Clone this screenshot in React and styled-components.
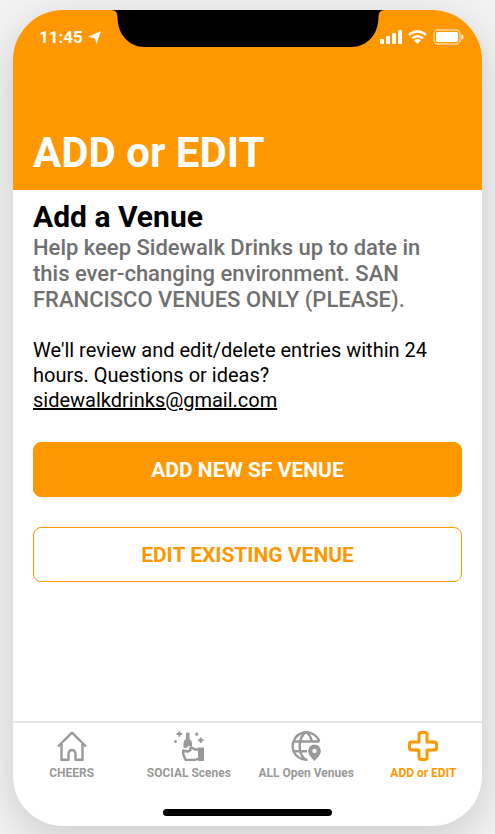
import React, { useState } from 'react';
import styled, { createGlobalStyle } from 'styled-components';

const orange = '#ff9800';
const grey = '#999';

const GlobalStyle = createGlobalStyle`
  * { box-sizing: border-box; }
  body {
    margin: 0;
    background: #f2f2f2;
    font-family: Roboto, 'Liberation Sans', sans-serif;
  }
`;

const Page = styled.div`
  display: flex;
  min-height: 100vh;
  padding: 10px 13px 8px;
  overflow: hidden;
`;

const Phone = styled.div`
  position: relative;
  flex: 1;
  display: flex;
  flex-direction: column;
  background: #fff;
  border-radius: 50px;
  box-shadow: 0 12px 40px rgba(0, 0, 0, 0.16);
`;

const Notch = styled.svg`
  position: absolute;
  top: 0;
  left: 50%;
  width: 273px;
  height: 37px;
  transform: translateX(-50%);
`;

const Header = styled.header`
  display: flex;
  flex-direction: column;
  justify-content: space-between;
  height: 180px;
  padding: 16px 18px 16px 20px;
  border-radius: 50px 50px 0 0;
  background: ${orange};
  color: #fff;
`;

const StatusBar = styled.div`
  display: flex;
  justify-content: space-between;
  align-items: center;
  height: 22px;
  padding-left: 6px;
`;

const Clock = styled.div`
  display: flex;
  align-items: center;
  gap: 5px;
  font-size: 17px;
  font-weight: 700;
`;

const Indicators = styled.div`
  display: flex;
  align-items: center;
  gap: 6px;
`;

const Title = styled.h1`
  margin: 0;
  font-size: 42px;
  line-height: 42px;
  font-weight: 700;
`;

const Content = styled.main`
  flex: 1;
  padding: 9px 20px 20px;
`;

const Heading = styled.h2`
  margin: 0;
  font-size: 30px;
  line-height: 36px;
  font-weight: 700;
  color: #000;
`;

const Subheading = styled.p`
  margin: 0 0 25px;
  font-size: 22px;
  line-height: 26px;
  font-weight: 500;
  color: #707070;
`;

const Note = styled.p`
  margin: 0 0 29px;
  font-size: 20px;
  line-height: 25px;
  color: #000;
`;

const MailLink = styled.a`
  color: inherit;
`;

const Button = styled.button`
  display: block;
  width: 100%;
  height: 55px;
  margin-bottom: 30px;
  border: 1px solid ${orange};
  border-radius: 8px;
  background: ${({ $outlined }) => ($outlined ? '#fff' : orange)};
  color: ${({ $outlined }) => ($outlined ? orange : '#fff')};
  font-family: inherit;
  font-size: 21px;
  line-height: 24px;
  font-weight: 700;
  cursor: pointer;
`;

const TabBar = styled.nav`
  display: grid;
  grid-template-columns: repeat(4, 1fr);
  border-top: 2px solid #e5e5e5;
  padding-top: 8px;
`;

const Tab = styled.button`
  display: flex;
  flex-direction: column;
  align-items: center;
  gap: 4px;
  padding: 0;
  border: 0;
  background: none;
  color: ${({ $active }) => ($active ? orange : grey)};
  font-family: inherit;
  font-size: 12px;
  line-height: 16px;
  font-weight: 700;
  white-space: nowrap;
  cursor: pointer;
`;

const TabIcon = styled.svg`
  width: 30px;
  height: 30px;
  fill: none;
  stroke: currentColor;
  stroke-width: 2.4;
  stroke-linejoin: round;
`;

const HomeIndicator = styled.div`
  width: 169px;
  height: 7px;
  margin: 28px auto 10px;
  border-radius: 4px;
  background: #000;
`;

const HomeIcon = () => (
  <TabIcon viewBox="0 0 30 30">
    <path d="M1 15.500 15 1.700l14 13.800" />
    <path d="M4.500 13v15.800h7v-6.300a3.500 3.500 0 0 1 7 0v6.300h7V13" />
  </TabIcon>
);

const BottleIcon = () => (
  <TabIcon viewBox="0 0 30 30">
    <g fill="currentColor" stroke="none">
      <path d="M12 2.500Q12 1.500 13.700 1.500T15.500 2.500V8q2.500 1.500 2.500 4v3.500l-3-.5-3 2H9.500v-5q0-2.500 2.500-4Z" />
      <path d="M24 16.500h6V30h-6Z" />
      <circle cx="1.500" cy="10.500" r="1.400" />
      <circle cx="22.700" cy="3.200" r="1.600" />
    </g>
    <path strokeWidth="2" d="M5.300.2v5.600M2.500 3h5.600M26.700 6.400V12M23.900 9.200h5.600" />
    <path d="M24 18.500h-3l-3.500-2q-2 .2-1 2.500l-2.500 1.500-4.800-1v3.500l1.500 4 1.300 2H21l3-1.500" />
  </TabIcon>
);

const GlobeIcon = () => (
  <TabIcon viewBox="0 0 30 30">
    <path d="M28.300 10.500A13.700 13.700 0 1 0 16.500 28.700" />
    <path d="M15 1C6.500 7 6.500 23 15 29M15 1q5 3.500 5.800 9.500M2 10.500h26.300M2 20.200h14" />
    <path
      fill="currentColor"
      stroke="none"
      fillRule="evenodd"
      d="M23.500 13.500a6.300 6.300 0 0 1 6.300 6.300c0 3.700-3 6.700-6.300 10.200-3.300-3.500-6.300-6.500-6.300-10.200a6.300 6.300 0 0 1 6.300-6.300Zm0 4.200a2.200 2.200 0 1 0 0 4.400 2.200 2.200 0 0 0 0-4.400Z"
    />
  </TabIcon>
);

const PlusIcon = () => (
  <TabIcon viewBox="0 0 30 30">
    <path
      strokeWidth="3"
      d="M13 1.500h4q2 0 2 2V11h7.500q2 0 2 2v4q0 2-2 2H19v7.500q0 2-2 2h-4q-2 0-2-2V19H3.500q-2 0-2-2v-4q0-2 2-2H11V3.500q0-2 2-2Z"
    />
  </TabIcon>
);

const LocationArrow = () => (
  <svg width="13" height="13" viewBox="0 0 13 13" fill="currentColor">
    <path d="M13 0 8.500 13 7 7.500.2 5.800Z" />
  </svg>
);

const SignalIcon = () => (
  <svg width="22" height="14" viewBox="0 0 22 14" fill="currentColor">
    <rect x="0" y="9" width="4" height="5" rx="1" />
    <rect x="6" y="6" width="4" height="8" rx="1" />
    <rect x="12" y="3" width="4" height="11" rx="1" />
    <rect x="18" y="0" width="4" height="14" rx="1" />
  </svg>
);

const WifiIcon = () => (
  <svg width="19" height="14" viewBox="0 0 19 14" fill="none" stroke="currentColor" strokeWidth="2.400">
    <path d="M1 5a12.200 12.200 0 0 1 17 0M4 8.400a8 8 0 0 1 11 0" />
    <path fill="currentColor" stroke="none" d="M6 10.500q3.500-2.800 7 0L9.500 14Z" />
  </svg>
);

const BatteryIcon = () => (
  <svg width="31" height="16" viewBox="0 0 31 16" fill="currentColor">
    <rect x="1" y="1" width="26" height="14" rx="4" fill="none" stroke="#ffd699" strokeWidth="1.400" />
    <rect x="3" y="3" width="22" height="10" rx="1.500" />
    <path d="M28.500 5q2 1 2 3t-2 3Z" />
  </svg>
);

const tabs = [
  { label: 'CHEERS', Icon: HomeIcon },
  { label: 'SOCIAL Scenes', Icon: BottleIcon },
  { label: 'ALL Open Venues', Icon: GlobeIcon },
  { label: 'ADD or EDIT', Icon: PlusIcon },
];

const App = () => {
  const [active, setActive] = useState('ADD or EDIT');

  return (
    <Page>
      <GlobalStyle />
      <Phone>
        <Header>
          <StatusBar>
            <Clock>
              11:45
              <LocationArrow />
            </Clock>
            <Indicators>
              <SignalIcon />
              <WifiIcon />
              <BatteryIcon />
            </Indicators>
          </StatusBar>
          <Title>ADD or EDIT</Title>
        </Header>
        <Notch viewBox="0 0 273 37">
          <path d="M0 0H273Q267 0 267 7C267 25 255 37 240 37H33C18 37 6 25 6 7Q6 0 0 0Z" />
        </Notch>

        <Content>
          <Heading>Add a Venue</Heading>
          <Subheading>
            Help keep Sidewalk Drinks up to date in this ever-changing environment. SAN FRANCISCO VENUES ONLY (PLEASE).
          </Subheading>
          <Note>
            We'll review and edit/delete entries within 24 hours. Questions or ideas?{' '}
            <MailLink href="mailto:sidewalkdrinks@gmail.com">sidewalkdrinks@gmail.com</MailLink>
          </Note>
          <Button type="button">ADD NEW SF VENUE</Button>
          <Button type="button" $outlined>EDIT EXISTING VENUE</Button>
        </Content>

        <TabBar>
          {tabs.map(({ label, Icon }) => (
            <Tab key={label} type="button" $active={label === active} onClick={() => setActive(label)}>
              <Icon />
              {label}
            </Tab>
          ))}
        </TabBar>
        <HomeIndicator />
      </Phone>
    </Page>
  );
};

export default App;
